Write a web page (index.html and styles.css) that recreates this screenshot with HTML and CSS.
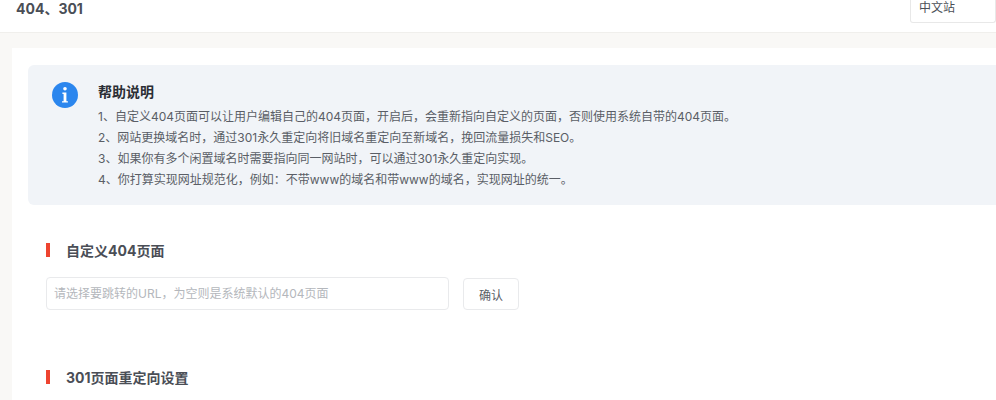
FILE: index.html
```html
<!DOCTYPE html>
<html lang="zh-CN">
<head>
<meta charset="utf-8">
<title>404、301</title>
<link rel="stylesheet" href="styles.css">
</head>
<body>
<div class="page">
  <header class="topbar">
    <h1 class="title">404、301</h1>
    <div class="lang">中文站</div>
  </header>
  <main class="card">
    <section class="notice">
      <svg class="info" viewBox="0 0 26 26" aria-hidden="true">
        <circle cx="13" cy="13" r="13" fill="#2b86ee"/>
        <circle cx="13" cy="6.8" r="1.8" fill="#fff"/>
        <path d="M10.4 10.6h4v8.6h1.5v1.4H10v-1.4h1.6v-7.2h-1.2z" fill="#fff"/>
      </svg>
      <div class="notice-body">
        <h2 class="notice-title">帮助说明</h2>
        <p>1、自定义404页面可以让用户编辑自己的404页面，开启后，会重新指向自定义的页面，否则使用系统自带的404页面。</p>
        <p>2、网站更换域名时，通过301永久重定向将旧域名重定向至新域名，挽回流量损失和SEO。</p>
        <p>3、如果你有多个闲置域名时需要指向同一网站时，可以通过301永久重定向实现。</p>
        <p>4、你打算实现网址规范化，例如：不带www的域名和带www的域名，实现网址的统一。</p>
      </div>
    </section>
    <h3 class="section-title first">自定义404页面</h3>
    <form class="row">
      <input class="url" type="text" placeholder="请选择要跳转的URL，为空则是系统默认的404页面">
      <button class="confirm" type="button">确认</button>
    </form>
    <h3 class="section-title second">301页面重定向设置</h3>
  </main>
</div>
</body>
</html>
```
FILE: styles.css
```css
* { box-sizing: border-box; }
html, body { margin: 0; padding: 0; height: 400px; overflow: hidden; background: #f9f8f6; }
body { font-family: Inter, "Noto Sans CJK SC", "Noto Sans", sans-serif; }
.page { width: 1040px; height: 400px; }
.topbar {
  height: 33px; background: #fff; border-bottom: 1px solid #f0efec;
  display: flex; justify-content: space-between; align-items: flex-start;
  padding-left: 16px; padding-right: 44px;
}
.title { margin: 0; font-size: 14px; line-height: 18px; font-weight: 700; color: #4a4e56; }
.lang {
  width: 86px; height: 23px; border: 1px solid #e8e8e8; border-top: 0; border-radius: 0 0 3px 3px;
  padding-left: 8px; font-size: 12px; line-height: 15px; color: #4b4f57; background: #fff;
}
.card { margin: 15px 0 0 12px; background: #fff; height: 352px; padding: 17px 0 0 16px; }
.notice {
  height: 140px; background: #f1f4f8; border-radius: 6px;
  display: flex; padding: 17px 0 0 24px;
}
.info { width: 26px; height: 26px; flex: none; }
.notice-body { margin-left: 20px; }
.notice-title { margin: 0 0 4px; font-size: 14px; line-height: 20px; font-weight: 700; color: #2b2e35; }
.notice-body p { margin: 0; font-size: 12px; line-height: 21px; color: #5a5e66; white-space: nowrap; }
.section-title {
  margin: 0; font-size: 14px; line-height: 20px; font-weight: 700; color: #4a4e56;
  padding-left: 20px; margin-left: 18px; position: relative;
}
.section-title::before {
  content: ""; position: absolute; left: 0; top: 2px; width: 4px; height: 14px; background: #ee4430;
}
.first { margin-top: 36px; }
.second { margin-top: 58px; }
.row { display: flex; align-items: flex-end; margin: 16px 0 0 18px; gap: 14px; }
.url {
  width: 403px; height: 33px; border: 1px solid #e9eaec; border-radius: 4px; padding: 0 7px;
  font: 12px Inter, "Noto Sans CJK SC", sans-serif; color: #43474f; background: #fff; outline: 0;
}
.url::placeholder { color: #b4b7bc; opacity: 1; }
.confirm {
  width: 56px; height: 32px; border: 1px solid #e9eaec; border-radius: 4px; background: #fff;
  font: 12px Inter, "Noto Sans CJK SC", sans-serif; color: #5a5e66; padding: 0;
}
```
